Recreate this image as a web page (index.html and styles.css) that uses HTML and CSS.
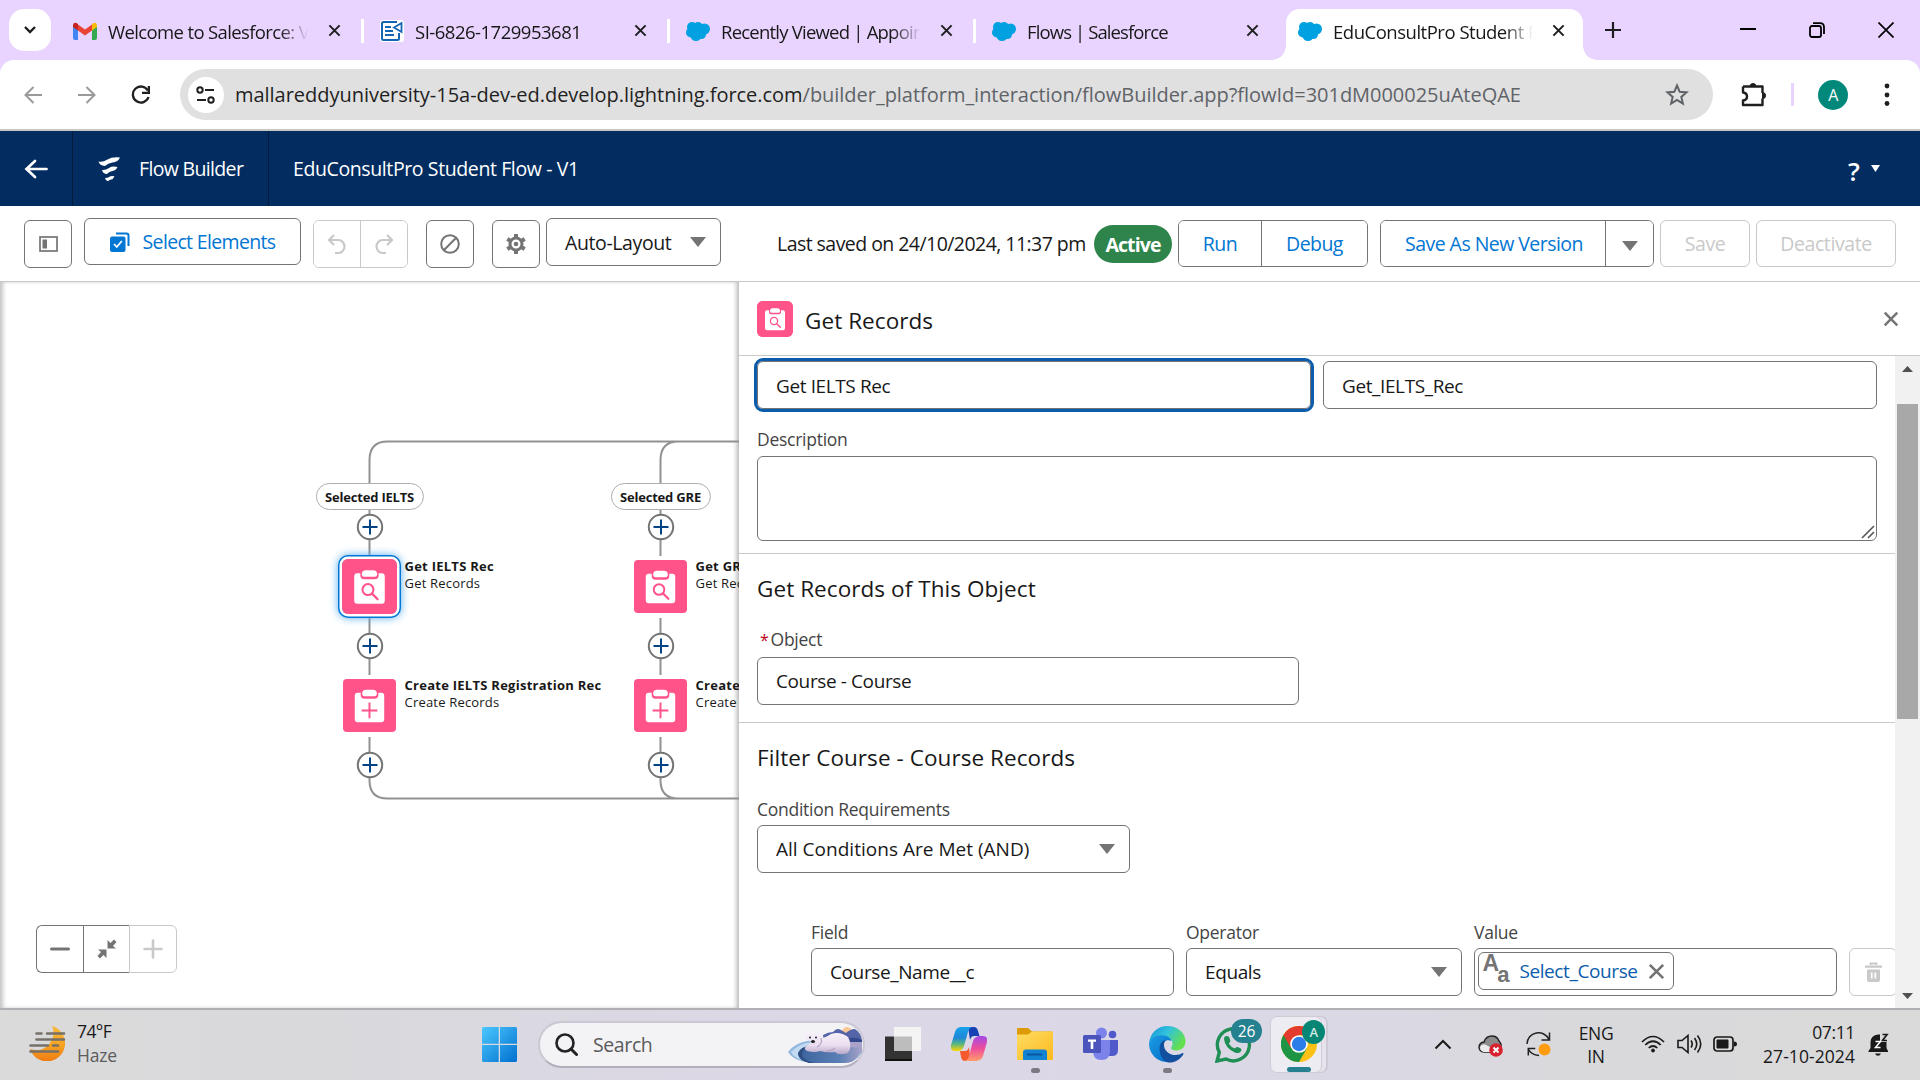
FILE: index.html
```html
<!DOCTYPE html>
<html lang="en">
<head>
<meta charset="utf-8">
<title>EduConsultPro Student Flow - V1</title>
<link rel="stylesheet" href="styles.css">
</head>
<body>
<svg class="defs" width="0" height="0">
  <defs>
    <symbol id="x" viewBox="0 0 14 14"><path d="M1.5 1.5l11 11M12.500 1.500l-11 11" fill="none" stroke="currentColor" stroke-width="2.200"/></symbol>
    <symbol id="cloud" viewBox="0 0 24 20"><g fill="#00a1e0"><circle cx="6" cy="6" r="5"/><circle cx="12" cy="5.500" r="4.500"/><circle cx="18.500" cy="8" r="5.500"/><circle cx="5" cy="11.500" r="5"/><circle cx="10" cy="14.500" r="5.500"/><circle cx="15.500" cy="13.500" r="4.500"/><path d="M5 6h13v8H5z"/></g></symbol>
    <symbol id="down" viewBox="0 0 16 10"><path d="M0 0h16L8 10z" fill="currentColor"/></symbol>
    <symbol id="clip" viewBox="0 0 54 54"><rect width="54" height="54" rx="4" fill="#ff538a"/><path d="M12 17q0-3 3-3h3v2q0 4 4 4h10q4 0 4-4v-2h3q3 0 3 3v24q0 3-3 3H15q-3 0-3-3z" fill="#fff"/><path d="M19.500 15q0-4 4-4h7q4 0 4 4 0 2.500-2 2.500h-11q-2 0-2-2.500z" fill="#fff"/></symbol>
    <symbol id="get" viewBox="0 0 54 54"><use href="#clip"/><circle cx="25.500" cy="30" r="5.400" fill="none" stroke="#ff538a" stroke-width="2"/><path d="M29.500 34l5.500 5.500" stroke="#ff538a" stroke-width="2.200" stroke-linecap="round"/></symbol>
    <symbol id="create" viewBox="0 0 54 54"><use href="#clip"/><path d="M27 24v16M19 32h16" stroke="#ff538a" stroke-width="2"/></symbol>
    <symbol id="add" viewBox="0 0 28 28"><circle cx="14" cy="14" r="12.200" fill="#fff" stroke="#747474" stroke-width="2"/><path d="M14 6.500v15M6.500 14h15" stroke="#014486" stroke-width="2"/></symbol>
  </defs>
</svg>

<header class="tabs">
  <button class="tab-search"><svg width="14" height="10" viewBox="0 0 14 10"><path d="M2 2l5 5 5-5" fill="none" stroke="#1f1f1f" stroke-width="2.400"/></svg></button>
  <div class="tab">
    <svg class="fav" width="24" height="18" viewBox="0 0 24 18"><path d="M0 3v13q0 2 2 2h3V8z" fill="#4285f4"/><path d="M24 3v13q0 2-2 2h-3V8z" fill="#34a853"/><path d="M5 2.500v6l7 5 7-5v-6l-7 5z" fill="#ea4335"/><path d="M0 3v2l5 3.500V2Q1-1 0 3z" fill="#c5221f"/><path d="M24 3v2l-5 3.500V2q4-3 5 1z" fill="#fbbc04"/></svg>
    <span class="tab-title t1">Welcome to Salesforce: Ver</span><svg class="tab-x"><use href="#x"/></svg>
  </div>
  <div class="tab">
    <svg class="fav" width="24" height="22" viewBox="0 0 24 22"><rect width="24" height="22" rx="3" fill="#fff"/><path d="M17 2H3.500q-1.500 0-1.500 1.500v15Q2 20 3.500 20h14q1.500 0 1.500-1.500V13" fill="none" stroke="#1565b5" stroke-width="2"/><path d="M5 7h6M5 11h8M5 15h9" stroke="#1565b5" stroke-width="2"/><path d="M21.500 3v9L14 7.500z" fill="#fff" stroke="#1565b5" stroke-width="1.800"/></svg>
    <span class="tab-title t2">SI-6826-1729953681</span><svg class="tab-x"><use href="#x"/></svg>
  </div>
  <div class="tab">
    <svg class="fav" width="24" height="20"><use href="#cloud"/></svg>
    <span class="tab-title t3">Recently Viewed | Appointm</span><svg class="tab-x"><use href="#x"/></svg>
  </div>
  <div class="tab">
    <svg class="fav" width="24" height="20"><use href="#cloud"/></svg>
    <span class="tab-title t4">Flows | Salesforce</span><svg class="tab-x"><use href="#x"/></svg>
  </div>
  <div class="tab active">
    <svg class="fav" width="24" height="20"><use href="#cloud"/></svg>
    <span class="tab-title t5">EduConsultPro Student Flow</span><svg class="tab-x"><use href="#x"/></svg>
  </div>
  <svg class="new-tab" width="16" height="16" viewBox="0 0 16 16"><path d="M8 0v16M0 8h16" stroke="#1f1f1f" stroke-width="2.200"/></svg>
  <div class="window-buttons">
    <svg width="16" height="16" viewBox="0 0 16 16"><path d="M0 7h16" stroke="#000" stroke-width="2"/></svg>
    <svg width="16" height="16" viewBox="0 0 16 16" fill="none" stroke="#000" stroke-width="1.800"><rect x="1" y="4" width="11" height="11" rx="2"/><path d="M4 1.200h7q4 0 4 4V12"/></svg>
    <svg width="16" height="16" viewBox="0 0 16 16"><path d="M.5.500l15 15M15.500.500l-15 15" stroke="#000" stroke-width="1.700"/></svg>
  </div>
</header>

<div class="toolbar-wrap">
<nav class="toolbar">
  <div class="nav-icons">
    <svg width="18" height="18" viewBox="0 0 18 18"><path d="M18 9H2M9.500 1L1.500 9l8 8" fill="none" stroke="#9a9a9a" stroke-width="2"/></svg>
    <svg width="18" height="18" viewBox="0 0 18 18"><path d="M0 9h16M8.500 1l8 8-8 8" fill="none" stroke="#9a9a9a" stroke-width="2"/></svg>
    <svg width="20" height="20" viewBox="0 0 20 20"><path d="M17.500 12A8 8 0 1 1 16.800 5.500" fill="none" stroke="#1f1f1f" stroke-width="2.300"/><path d="M19 1v8h-8V6.800h5.700V1z" fill="#1f1f1f"/></svg>
  </div>
  <div class="omnibox">
    <span class="site"><svg width="20" height="18" viewBox="0 0 20 18" fill="none" stroke="#1f1f1f" stroke-width="2"><circle cx="4" cy="4" r="2.700"/><path d="M9 4h9M1 14h9"/><circle cx="15" cy="14" r="2.700"/></svg></span>
    <span class="url">mallareddyuniversity-15a-dev-ed.develop.lightning.force.com<span class="path">/builder_platform_interaction/flowBuilder.app?flowId=301dM000025uAteQAE</span></span>
    <svg class="star" width="24" height="23" viewBox="0 0 24 23"><path d="M12 2.500l2.700 6.300 6.800.6-5.200 4.500 1.600 6.700L12 17l-5.900 3.600 1.600-6.700L2.500 9.400l6.800-.6z" fill="none" stroke="#5f6368" stroke-width="2"/></svg>
  </div>
  <svg class="puzzle" width="26" height="26" viewBox="0 0 26 26"><path d="M2 4.500h19.500V11M2 4.500v6q4 .5 4 4t-4 4V23h19.500v-6.500" fill="none" stroke="#1f1f1f" stroke-width="2.400" stroke-linejoin="round"/><path d="M9 4.500a3 3 0 0 1 6 0zM21.500 10.500a3 3 0 0 1 0 6.200z" fill="#1f1f1f" stroke="#1f1f1f"/></svg>
  <i class="bar-divider"></i>
  <span class="avatar">A</span>
  <svg class="kebab" width="6" height="24" viewBox="0 0 6 24"><circle cx="3" cy="3" r="2.400"/><circle cx="3" cy="12" r="2.400"/><circle cx="3" cy="20.500" r="2.400"/></svg>
</nav>
</div>

<header class="app-header">
  <a class="back"><svg width="24" height="20" viewBox="0 0 24 20"><path d="M22.500 10H3M11 2l-8.500 8L11 18" fill="none" stroke="#fff" stroke-width="2.700" stroke-linecap="round"/></svg></a>
  <div class="brand"><svg width="23" height="26" viewBox="0 0 23 26" fill="#fff"><path d="M.5 5.500q4.500.8 9-2T22 1.500Q20 6 14.500 6.500 10 7 7 10 1.500 9.500.5 5.500zM4 14q4 .3 7-2t8.500-1q-1.500 3.500-5 4-3.500.3-5.500 3Q5 18 4 14zM7 22q3 0 4.500-1.200t5-.6q-1 3-4 3.600-1.500.3-2.500 1.500Q7.500 24.500 7 22z"/></svg><span>Flow Builder</span></div>
  <div class="flow-title">EduConsultPro Student Flow - V1</div>
  <div class="help"><b>?</b><svg width="9" height="7" viewBox="0 0 16 10" preserveAspectRatio="none"><path d="M0 0h16L8 10z" fill="#fff"/></svg></div>
</header>

<section class="actions">
  <button class="btn sq"><svg width="19" height="16" viewBox="0 0 19 16"><rect x="1" y="1" width="17" height="14" fill="none" stroke="#747474" stroke-width="1.700"/><path d="M3.500 3.500h4.500v9H3.500z" fill="#747474"/></svg></button>
  <button class="btn select"><svg width="20" height="20" viewBox="0 0 20 20"><path d="M6 1.500h10.500q2 0 2 2V14" fill="none" stroke="#0176d3" stroke-width="2"/><rect y="4.500" width="15.500" height="15.500" rx="2" fill="#0176d3"/><path d="M4 12l2.800 3 5-6" fill="none" stroke="#fff" stroke-width="1.800"/></svg><span>Select Elements</span></button>
  <div class="group off undo">
    <button><svg width="20" height="21" viewBox="0 0 20 21"><path d="M7 1L2 6l5 5M2.500 6h9a6 6.500 0 0 1 0 13H8" fill="none" stroke="#c9c9c9" stroke-width="2.200"/></svg></button>
    <button><svg width="20" height="21" viewBox="0 0 20 21"><path d="M13 1l5 5-5 5M17.500 6h-9a6 6.500 0 0 0 0 13H12" fill="none" stroke="#c9c9c9" stroke-width="2.200"/></svg></button>
  </div>
  <button class="btn sq ban"><svg width="20" height="20" viewBox="0 0 20 20" fill="none" stroke="#747474" stroke-width="2"><circle cx="10" cy="10" r="8.800"/><path d="M4.300 15.700L15.700 4.300"/></svg></button>
  <button class="btn sq gear"><svg width="20" height="20" viewBox="0 0 20 20"><circle cx="10" cy="10" r="6" fill="none" stroke="#747474" stroke-width="3"/><circle cx="10" cy="10" r="2.300" fill="#747474"/><path d="M10 0v4M10 16v4M1.300 5l3.500 2M15.200 13l3.500 2M1.300 15l3.500-2M15.200 7l3.500-2" stroke="#747474" stroke-width="4"/></svg></button>
  <button class="btn layout"><span>Auto-Layout</span><svg class="tri"><use href="#down"/></svg></button>
  <span class="saved">Last saved on 24/10/2024, 11:37 pm</span>
  <span class="badge">Active</span>
  <div class="group run"><button>Run</button><button>Debug</button></div>
  <div class="group version"><button>Save As New Version</button><button><svg class="tri"><use href="#down"/></svg></button></div>
  <button class="btn off save">Save</button>
  <button class="btn off deact">Deactivate</button>
</section>

<main class="work">
  <section class="canvas">
    <svg class="lines" width="739" height="726" viewBox="0 282 739 726" fill="none" stroke="#919191" stroke-width="2">
      <path d="M739 441.500H387.500Q369.500 441.500 369.500 460V556M678.500 441.500Q660.500 441.500 660.500 460V556"/>
      <path d="M369.500 618v57M660.500 618v57M369.500 737v43.500Q369.500 798.500 387.500 798.500H739M660.500 737v43.500Q660.500 798.500 678.500 798.500"/>
    </svg>
    <div class="branch b1">
      <span class="pill">Selected IELTS</span>
      <svg class="plus p1"><use href="#add"/></svg>
      <div class="node n1 selected"><svg><use href="#get"/></svg><p><b>Get IELTS Rec</b><span>Get Records</span></p></div>
      <svg class="plus p2"><use href="#add"/></svg>
      <div class="node n2"><svg><use href="#create"/></svg><p><b>Create IELTS Registration Rec</b><span>Create Records</span></p></div>
      <svg class="plus p3"><use href="#add"/></svg>
    </div>
    <div class="branch b2">
      <span class="pill">Selected GRE</span>
      <svg class="plus p1"><use href="#add"/></svg>
      <div class="node n1"><svg><use href="#get"/></svg><p><b>Get GRE Rec</b><span>Get Records</span></p></div>
      <svg class="plus p2"><use href="#add"/></svg>
      <div class="node n2"><svg><use href="#create"/></svg><p><b>Create GRE Registration Rec</b><span>Create Records</span></p></div>
      <svg class="plus p3"><use href="#add"/></svg>
    </div>
    <div class="zoom">
      <button><svg width="20" height="20" viewBox="0 0 20 20"><path d="M1.500 10h17" stroke="#747474" stroke-width="3" stroke-linecap="round"/></svg></button>
      <button><svg width="20" height="20" viewBox="0 0 20 20" fill="#747474"><path d="M10.500 1v8.500H19L16 7l3.500-4L17 .5 13.500 4zM9.500 19v-8.500H1L4 13 .5 17 3 19.500 6.500 16z"/></svg></button>
      <button class="off"><svg width="20" height="20" viewBox="0 0 20 20"><path d="M1.500 10h17M10 1.500v17" stroke="#c9c9c9" stroke-width="2.600" stroke-linecap="round"/></svg></button>
    </div>
  </section>

  <aside class="panel">
    <header class="panel-head">
      <svg class="head-icon" width="36" height="36"><use href="#get"/></svg>
      <h2>Get Records</h2>
      <svg class="close" width="16" height="16"><use href="#x"/></svg>
    </header>
    <div class="panel-body">
      <form class="form">
        <section class="intro">
          <div class="pair"><div class="field focus">Get IELTS Rec</div><div class="field">Get_IELTS_Rec</div></div>
          <label>Description</label>
          <div class="field area"><svg width="14" height="14" viewBox="0 0 14 14"><path d="M1 13L13 1M7 13l6-6" stroke="#555" stroke-width="1.600"/></svg></div>
        </section>
        <section class="object">
          <h3>Get Records of This Object</h3>
          <label class="req"><i>*</i>Object</label>
          <div class="field obj">Course - Course</div>
        </section>
        <section class="filter">
          <h3 class="h-filter">Filter Course - Course Records</h3>
          <label>Condition Requirements</label>
          <div class="field cond"><span>All Conditions Are Met (AND)</span><svg class="tri"><use href="#down"/></svg></div>
          <div class="condition">
            <div><label>Field</label><div class="field f1">Course_Name__c</div></div>
            <div><label>Operator</label><div class="field f2"><span>Equals</span><svg class="tri"><use href="#down"/></svg></div></div>
            <div><label>Value</label><div class="field f3"><span class="token"><span class="aa"><b>A</b><b>a</b></span><a>Select_Course</a><svg width="17" height="17" viewBox="0 0 14 14"><use href="#x"/></svg></span></div></div>
            <button class="trash" type="button"><svg width="17" height="20" viewBox="0 0 17 20"><path d="M5.500 3V1.500h6V3" fill="none" stroke="#c9c9c9" stroke-width="1.800"/><path d="M0 3.500h17v2.300H0zM2 7.500h13V18q0 2-2 2H4q-2 0-2-2z" fill="#c9c9c9"/><path d="M6.700 10.500v6M10.300 10.500v6" stroke="#fff" stroke-width="1.700"/></svg></button>
          </div>
        </section>
      </form>
      <div class="scroll">
        <svg width="11" height="6" viewBox="0 0 11 6"><path d="M0 6h11L5.500 0z" fill="#505050"/></svg>
        <i></i>
        <svg width="11" height="6" viewBox="0 0 11 6"><path d="M0 0h11L5.500 6z" fill="#505050"/></svg>
      </div>
    </div>
  </aside>
</main>

<footer class="taskbar">
  <div class="weather">
    <svg width="37" height="36" viewBox="0 0 37 36"><defs><linearGradient id="moon" x2="0" y2="1"><stop stop-color="#f9b73a"/><stop offset=".5" stop-color="#f5a623"/><stop offset="1" stop-color="#f07c12"/></linearGradient></defs><path d="M23 1A18 18 0 1 1 1 24q13 4 20-6 6-9 2-17z" fill="url(#moon)"/><path d="M7.500 8.500h5M18 8.500h17M7.500 14.500h27.500M1.500 20.500H19M24 20.500h5M1.500 26.500H29" stroke="#767069" stroke-width="2.600" stroke-linecap="round"/></svg>
    <div class="wtext"><span>74°F</span><span class="sub">Haze</span></div>
  </div>
  <div class="apps">
    <svg class="win" width="35" height="35" viewBox="0 0 35 35"><defs><linearGradient id="w" x2="1" y2="1"><stop stop-color="#4cc8ff"/><stop offset="1" stop-color="#0070cf"/></linearGradient></defs><path d="M1 0h15.700v16.700H0V1zM18 0h16l1 1v15.700H18zM0 18h16.700v17H1l-1-1zM18 18h17v16l-1 1H18z" fill="url(#w)"/></svg>
    <div class="search">
      <svg width="23" height="23" viewBox="0 0 23 23"><circle cx="10" cy="10" r="8.500" fill="none" stroke="#222" stroke-width="2.600"/><path d="M16 16l5.500 5.500" stroke="#222" stroke-width="3" stroke-linecap="round"/></svg>
      <span>Search</span>
      <svg class="bear" width="75" height="37" viewBox="0 0 75 37"><defs><linearGradient id="sea" x2="1"><stop stop-color="#3a649c"/><stop offset=".65" stop-color="#5b7fb5"/><stop offset="1" stop-color="#aaa3c8"/></linearGradient><linearGradient id="fur" x2="0" y2="1"><stop stop-color="#f8f2fb"/><stop offset=".6" stop-color="#e9deef"/><stop offset="1" stop-color="#b9a6c8"/></linearGradient></defs><circle cx="59" cy="6" r="5" fill="#f7c795"/><path d="M35 9q5-3 10-3 4-5 8-2l5 3q7-6 12-3 4 6 4 12v12H37z" fill="#5364a9"/><path d="M38 12q12-3 20 1 9-3 16 1v3H40z" fill="#34498e"/><path d="M58 16h16v12H58z" fill="#a9a2c9"/><path d="M0 26Q9 14 30 14l44 10q1 6-9 12H18Q5 34 0 26z" fill="#93b9df"/><path d="M3 26Q12 17 24 16l-8 8q-4 6 4 11Q6 33 3 26z" fill="#c4daf0"/><path d="M10 28q4-8 15-10l49 4q-2 9-12 15H22Q11 35 10 28z" fill="url(#sea)"/><path d="M10 27q0 7 11 10h5q-12-3-12-9 1-6 8-8-10 1-12 7z" fill="#2f4f84"/><path d="M17 8q0-3 3-2 1 1 2 1h8q4-3 4 1 0 2-1 4 4 0 10-4 9-3 17 3 3 5 2 12-1 5-7 5-5 1-8-2-8 1-15-1-5 2-13 0-5-3 1-6l4-3q-7-2-7-8z" fill="url(#fur)"/><path d="M33 12q2 6-4 9M47 22q-3 3-9 3" fill="none" stroke="#b7a6c5" stroke-width="1.200"/><circle cx="22" cy="11.500" r="1" fill="#222"/><circle cx="28" cy="11.500" r="1" fill="#222"/><ellipse cx="25" cy="15.500" rx="2" ry="1.500" fill="#222"/></svg>
    </div>
    <svg class="tv" width="36" height="34" viewBox="0 0 36 34"><path d="M0 9.500h27V34H0z" fill="#333"/><path d="M0 32h27v2H0z" fill="#111"/><path d="M9 0h27v24H9z" fill="#f4f4f4"/><path d="M9 9.500h18V24H9z" fill="#bdbdbd"/></svg>
    <svg class="copilot" width="36" height="34" viewBox="0 0 36 34"><defs><linearGradient id="c1" x2="0" y2="1"><stop stop-color="#1aa2e8"/><stop offset=".45" stop-color="#1e88d8"/><stop offset=".7" stop-color="#55b583"/><stop offset="1" stop-color="#ffd500"/></linearGradient><linearGradient id="c2" x2="0" y2="1"><stop stop-color="#a349e8"/><stop offset=".5" stop-color="#ee4d9b"/><stop offset="1" stop-color="#ff9d6a"/></linearGradient></defs><path d="M17 0h6q3 0 4 4l1.500 5H23q-3 0-4 4z" fill="#1740b5"/><path d="M9 0h12q-3 1-4 5l-4 14q-1 4-5 5H4q-5 0-4-6L4 5Q5 1 9 0z" fill="url(#c1)"/><path d="M9 24h5q3 0 4-4l1 9q-1 4-5 5-3 0-4-4z" fill="#f55a2c"/><path d="M28 9h4q5 0 4 6l-4 14q-1 4-6 5H14q3-1 4-5l4-15q1-4 6-5z" fill="url(#c2)"/></svg>
    <div class="app dot explorer"><svg width="36" height="34" viewBox="0 0 36 34"><defs><linearGradient id="fold" x2="1" y2="1"><stop stop-color="#ffdc62"/><stop offset="1" stop-color="#fbba20"/></linearGradient></defs><path d="M0 2q0-1 1-1h10l4 3.500h20l1 1V12H0z" fill="#dc9b06"/><path d="M0 7.500h11l4-3h21V33H0z" fill="url(#fold)"/><path d="M6 33v-8q0-2.500 3-2.500h18q3 0 3 2.500v8z" fill="#1282d2"/><path d="M10 27.500h15" stroke="#0b559c" stroke-width="2"/></svg></div>
    <svg class="teams" width="36" height="34" viewBox="0 0 36 34"><circle cx="18.500" cy="6" r="5.500" fill="#7b83eb"/><circle cx="29.500" cy="7.500" r="3.800" fill="#5059c9"/><path d="M23 13h12v10q0 6-6 6h-4z" fill="#5059c9"/><path d="M10 13h17v11q0 9-8.500 9T10 24z" fill="#7b83eb"/><rect y="8" width="18" height="18" rx="1.500" fill="#4b53bc"/><path d="M5 12.500h8v2.300h-2.700V22H7.700v-7.200H5z" fill="#fff"/></svg>
    <div class="app dot edge"><svg width="37" height="37" viewBox="0 0 37 37"><defs><linearGradient id="e1" x2="1" y2=".5"><stop stop-color="#168ed8"/><stop offset=".5" stop-color="#32c2dd"/><stop offset="1" stop-color="#63e04e"/></linearGradient><linearGradient id="e2" x2="1" y2="1"><stop stop-color="#1b9de2"/><stop offset="1" stop-color="#0368c7"/></linearGradient></defs><path d="M0 18.500A18.300 18.300 0 0 1 18.500 0C29 0 36.500 7.500 36.500 15c0 6-4 9.500-9 9.500-5 0-6-2-5-3.500 3-5-1-10-6-10C9 11 1 12 0 18.500z" fill="url(#e1)"/><path d="M0 18.500C1 12 7 9 12.500 9.300 18 9.500 22 12 22.500 15c-5-2-9 1-9 6 0 8 6 12 12 13.500A18.300 18.300 0 0 1 0 18.500z" fill="url(#e2)"/><path d="M10.500 22C10.500 17 14 14 17 14c-5 5 0 15 9 15 3.500 0 6-1 7.500-2 1.500 0 1 1 .5 2-5 7-11 8-15 7.500-5-1-8.500-8-8.500-14.500z" fill="#124f9e"/></svg></div>
    <div class="wa"><svg width="37" height="37" viewBox="0 0 37 37"><path d="M2 35l2.300-8.600A16 16 0 1 1 11 33z" fill="none" stroke="#1f8f55" stroke-width="3.400"/><path d="M9 13q0-3 3-3 2 0 2.500 2l.8 2.500q.3 1.500-1.500 3 2.500 4 6 5 1.500-2 3-1.500l3 1.500q1.500 1 0 3-2 2.500-6 1Q10 22 9 13z" fill="#1f8f55"/></svg><span>26</span></div>
    <div class="chrome"><svg width="36" height="36" viewBox="0 0 36 36"><circle cx="18" cy="18" r="18" fill="#fbc116"/><path d="M18 18L2.400 9A18 18 0 0 0 18 36l7.800-13.500z" fill="#1e9544"/><path d="M2.400 9A18 18 0 0 1 33.600 9H18l-7.800 13.500z" fill="#e33b2e"/><circle cx="18" cy="18" r="8.800" fill="#fff"/><circle cx="18" cy="18" r="7.200" fill="#2b7de9"/></svg><span>A</span></div>
  </div>
  <div class="tray">
    <svg class="chev" width="18" height="11" viewBox="0 0 18 11"><path d="M1.500 9.500L9 2l7.500 7.500" fill="none" stroke="#1a1a1a" stroke-width="2"/></svg>
    <svg class="cloudx" width="26" height="22" viewBox="0 0 26 22"><path d="M6 17q-5-.5-5-5 .5-4.500 5-5 2-6 8-6 5 0 7 5l2 3v8z" fill="#8c8c8c" stroke="#222" stroke-width="1.400"/><path d="M2 12q3-5 8-1l6 3-4 3H6q-4-.5-4-5z" fill="#ececec"/><circle cx="18" cy="15" r="6.800" fill="#d8232f"/><path d="M15.500 12.500l5 5M20.500 12.500l-5 5" stroke="#fff" stroke-width="2"/></svg>
    <svg class="sync" width="26" height="26" viewBox="0 0 26 26"><path d="M1 13A11.500 11.500 0 0 1 23 8.500M23.500 1.500v7.500h-8M13 24.500Q5 24 2.300 18M2.300 24.500v-7h7" fill="none" stroke="#222" stroke-width="1.500"/><circle cx="18.500" cy="18.500" r="6" fill="#ff9c0f"/></svg>
    <div class="lang"><span>ENG</span><span>IN</span></div>
    <svg class="wifi" width="24" height="18" viewBox="0 0 24 18" fill="none" stroke="#1a1a1a" stroke-width="1.700"><path d="M1 7q11-11 22 0M4.300 10q7.700-7.500 15.400 0M7.700 13q4.300-4 8.600 0"/><circle cx="12" cy="15.500" r="1.500" fill="#1a1a1a" stroke-width="1"/></svg>
    <svg class="spk" width="25" height="20" viewBox="0 0 25 20" fill="none" stroke="#1a1a1a" stroke-width="1.600"><path d="M1 6.500h4L11 1.500v17L5 13.500H1zM14 6.500q2.500 3.500 0 7M17.500 4q4.500 6 0 12M20.500 1.500q6.500 8.500 0 17"/></svg>
    <svg class="bat" width="25" height="16" viewBox="0 0 25 16"><rect x="1" y="1" width="19" height="14" rx="3" fill="none" stroke="#1a1a1a" stroke-width="1.700"/><rect x="3.500" y="3.500" width="12" height="9" rx="1" fill="#1a1a1a"/><path d="M21 5.500q3 0 3 2.500t-3 2.500z" fill="#1a1a1a"/></svg>
    <div class="clock"><span>07:11</span><span>27-10-2024</span></div>
    <svg class="bell" width="21" height="23" viewBox="0 0 21 23"><path d="M2.500 9Q3 2 10 1.500h2V9h6.500v6l1.500 3v1H.5v-1l2-3zM7 20.500h6q-1 2.300-3 2.300T7 20.500z" fill="#1a1a1a"/><path d="M14.500 1.500h4.500l-4.500 6H19" fill="none" stroke="#1a1a1a" stroke-width="1.700"/><path d="M7.500 8.500h5l-5 6h5" fill="none" stroke="#fff" stroke-width="1.500"/></svg>
  </div>
</footer>
</body>
</html>
```
FILE: styles.css
```css
* { box-sizing: border-box; }
body {
  margin: 0; width: 1920px; height: 1080px; overflow: hidden;
  display: flex; flex-direction: column;
  font-family: "Open Sans", "Noto Sans", sans-serif; font-size: 19.5px; color: #181818;
  letter-spacing: -0.02em; background: #fff; white-space: nowrap;
}
svg { display: block; flex: none; }
.defs { position: absolute; }
button { font: inherit; letter-spacing: inherit; padding: 0; background: #fff; border: 0; display: flex; align-items: center; justify-content: center; color: #0176d3; white-space: nowrap; }

/* browser tab strip */
.tabs { height: 60px; flex: none; background: #e8d4ff; display: flex; align-items: flex-start; padding-left: 9px; }
.tab-search { width: 42px; height: 42px; margin-top: 9px; border-radius: 15px; }
.tab { width: 306px; height: 51px; margin-top: 9px; padding-left: 16px; display: flex; align-items: center; padding-bottom: 8px; border-right: 3px solid transparent; position: relative; }
.tab:nth-child(2) { margin-left: 7px; padding-left: 15px; }
.tab:nth-child(2) .tab-x { margin-left: 18px; }
.tab:nth-child(-n+5):not(.active)::after { content: ""; position: absolute; right: -3px; top: 10px; width: 3px; height: 24px; background: #fff; }
.tab:nth-child(5)::after { display: none; }
.tab.active { width: 297px; background: #fff; border: 0; border-radius: 14px 14px 0 0; margin-left: 4px; padding-left: 12px; }
.tab.active::before, .tab.active::after { content: ""; position: absolute; bottom: 0; width: 14px; height: 14px; }
.tab.active::before { left: -14px; background: radial-gradient(circle at 0 0, transparent 13.5px, #fff 14px); }
.tab.active::after { right: -14px; background: radial-gradient(circle at 100% 0, transparent 13.5px, #fff 14px); }
.tab-title { width: 202px; margin-left: 11px; font-size: 18.500px; overflow: hidden; line-height: 30px; padding-top: 2px; letter-spacing: -0.034em; -webkit-mask-image: linear-gradient(90deg, #000 172px, transparent 200px); mask-image: linear-gradient(90deg, #000 172px, transparent 200px); }
.t2 { letter-spacing: -0.027em; }
.t3 { letter-spacing: -0.042em; }
.t4 { letter-spacing: -0.048em; }
.t5 { letter-spacing: -0.026em; }
.tab-x { width: 13px; height: 13px; margin-left: 17px; color: #1f1f1f; }
.new-tab { margin: 22px 0 0 22px; }
.window-buttons { display: flex; gap: 53px; margin: 22px 0 0 119px; }

/* address bar */
.toolbar-wrap { background: #e8d4ff; flex: none; }
.toolbar { height: 71px; display: flex; align-items: center; border-bottom: 2px solid #c6c6c6; border-radius: 14px 14px 0 0; background: #fff; }
.nav-icons { display: flex; align-items: center; gap: 35.500px; margin-left: 24px; width: 156px; }
.omnibox { width: 1533px; height: 51px; border-radius: 26px; background: #e0e0e0; display: flex; align-items: center; padding-left: 8px; }
.site { width: 36px; height: 36px; border-radius: 50%; background: #fff; display: grid; place-items: center; }
.url { margin-left: 11px; width: 1430px; font-size: 20px; color: #1f1f1f; letter-spacing: -0.0015em; }
.path { color: #5f6368; }
.puzzle { margin-left: 28px; }
.bar-divider { width: 3px; height: 23px; background: #e8d4ff; margin-left: 24px; }
.avatar { width: 30px; height: 30px; border-radius: 50%; background: #00897b; color: #fff; font-size: 16px; margin-left: 24px; display: grid; place-items: center; }
.kebab { margin-left: 36px; fill: #1f1f1f; }

/* app header */
.app-header { height: 75px; flex: none; background: #032d60; color: #fff; display: flex; align-items: stretch; }
.app-header > * { display: flex; align-items: center; }
.back { width: 73px; padding-left: 24px; border-right: 1px solid #041c3c; }
.brand { width: 196px; padding-left: 25px; border-right: 1px solid #041c3c; gap: 18px; letter-spacing: -0.034em; }
.flow-title { padding-left: 24px; width: 1579px; }
.help { gap: 12px; }
.help b { font-size: 26px; font-weight: 600; margin-top: 4px; }

/* builder actions */
.actions { height: 76px; flex: none; border-bottom: 1px solid #c9c9c9; display: flex; align-items: flex-start; padding: 14px 0 0 24px; letter-spacing: -0.028em; }
.btn { border: 1.5px solid #747474; border-radius: 6px; height: 47px; flex: none; }
.sq { width: 48px; height: 48px; }
.select { width: 217px; margin: -2px 0 0 12px; gap: 13px; letter-spacing: -0.034em; }
.group { display: flex; height: 47px; border: 1.5px solid #747474; border-radius: 6px; overflow: hidden; flex: none; }
.group button + button { border-left: 1.5px solid #747474; }
.group.off, .btn.off { border-color: #c9c9c9; color: #c9c9c9; }
.group.off button + button { border-color: #c9c9c9; }
.undo { width: 95px; height: 48px; margin-left: 12px; }
.undo button { flex: 1; }
.ban, .gear { margin-left: 18px; }
.layout { width: 175px; height: 48px; margin: -2px 0 0 6px; color: #181818; justify-content: space-between; padding: 0 14px 0 18px; letter-spacing: -0.02em; }
.tri { width: 16px; height: 10px; color: #747474; }
.saved { margin-left: 56px; width: 317px; line-height: 48px; }
.badge { width: 78px; height: 38px; margin-top: 5px; border-radius: 19px; background: #2e844a; color: #fff; font-weight: 700; text-align: center; line-height: 39px; letter-spacing: -0.045em; }
.run { margin-left: 6px; width: 190px; }
.run button:first-child { width: 82px; }
.run button:last-child { flex: 1; }
.version { margin-left: 12px; width: 274px; }
.version button:first-child { flex: 1; padding-left: 2px; }
.version button:last-child { width: 48px; padding-top: 4px; }
.save { width: 90px; margin-left: 6px; letter-spacing: -0.02em; }
.deact { width: 140px; margin-left: 6px; letter-spacing: -0.02em; }

/* flow canvas */
.work { flex: none; height: 726px; display: flex; }
.canvas { width: 739px; position: relative; overflow: hidden; box-shadow: inset 4px 0 4px -1px #c4c4c4, inset -5px 0 5px -3px #b0b0b0; }
.lines { position: absolute; left: 0; top: 0; }
.branch { position: absolute; top: 0; width: 0; }
.b1 { left: 369.5px; }
.b2 { left: 660.5px; }
.branch > * { position: absolute; }
.pill { top: 201px; left: 0; transform: translateX(-50%); height: 27px; line-height: 26px; border: 1px solid #aeaeae; border-radius: 14px; background: #fff; font-weight: 700; font-size: 13px; padding: 0 8.5px; letter-spacing: -0.014em; }
.plus { width: 28px; height: 28px; left: -14px; }
.p1 { top: 231px; }
.p2 { top: 350px; }
.p3 { top: 469px; }
.node { left: -27px; display: flex; }
.node svg { width: 53px; height: 53px; }
.n1 { top: 278px; }
.n2 { top: 397px; }
.selected svg { width: 55px; height: 55px; margin: -1px; border-radius: 6px; box-shadow: 0 0 0 2.500px #fff, 0 0 0 4px #0176d3, 0 0 8px 4px #5aaef0; }
.node p { margin: -2px 0 0 9px; font-size: 13px; line-height: 17.300px; letter-spacing: 0.015em; }
.node b, .node span { display: block; }
.node b { letter-spacing: 0.02em; }
.zoom { position: absolute; left: 36px; top: 643px; display: flex; }
.zoom button { width: 46px; height: 48px; border: 1.500px solid #747474; border-right: 0; }
.zoom button:first-child { border-radius: 6px 0 0 6px; width: 47px; }
.zoom button:last-child { border: 1.500px solid #c9c9c9; border-radius: 0 6px 6px 0; width: 48px; }

/* property panel */
.panel { width: 1181px; display: flex; flex-direction: column; background: #fff; }
.panel-head { height: 74px; flex: none; border-bottom: 1px solid #c9c9c9; display: flex; align-items: center; padding: 1px 21px 0 18px; }
.head-icon { border-radius: 6px; background: #ff538a; }
h2, h3 { margin: 0; font-weight: 400; font-size: 22.500px; letter-spacing: 0.003em; }
.panel-head h2 { margin: 2px 0 0 12px; flex: 1; }
.close { color: #747474; }
.panel-body { display: flex; flex: 1; min-height: 0; }
.form { width: 1156px; overflow: hidden; }
.form section { padding-left: 18px; border-bottom: 1px solid #c9c9c9; }
.form .filter { border: 0; }
.field { height: 48px; border: 1.500px solid #747474; border-radius: 6px; display: flex; align-items: center; justify-content: space-between; padding: 0 14px 0 18px; font-size: 19px; }
.field.focus { outline: 3px solid #0b5cab; }
.pair .field { padding-top: 1px; }
.intro { height: 198px; padding-top: 5px; }
.pair { display: grid; grid-template-columns: 554px 554px; gap: 12px; }
label { display: block; font-size: 17.500px; line-height: 20px; color: #444; letter-spacing: -0.015em; }
.intro label { margin: 20px 0 7px; }
.area { width: 1120px; height: 85px; align-items: flex-end; justify-content: flex-end; padding: 0 1px 1px; }
h3 { line-height: 30px; padding-top: 20px; }
.object { height: 169px; }
.object label { margin: 25px 0 7px; padding-left: 3px; }
.req i { color: #ba0517; font-style: normal; margin-right: 2px; font-size: 16px; }
.obj { width: 542px; }
.filter label { margin: 26px 0 6px; }
.cond { width: 373px; letter-spacing: 0.001em; }
.condition { display: flex; gap: 12px; margin: 50px 0 0 54px; }
.condition label { margin: -1px 0 6px; }
.f1 { width: 363px; }
.f2 { width: 276px; }
.f3 { width: 363px; padding: 0 2.500px; }
.token { width: 196px; height: 38px; border: 1px solid #747474; border-radius: 6px; display: flex; align-items: center; padding: 0 8px 0 4px; margin-top: -2px; }
.token a { color: #0b5cab; flex: 1; margin-left: 10px; }
.token svg { color: #747474; }
.aa { display: flex; color: #747474; font-family: "Liberation Sans", Arial, sans-serif; line-height: 24px; letter-spacing: 0; }
.aa b:first-child { font-size: 23px; margin-top: -4px; }
.aa b:last-child { font-size: 22px; margin: 8px 0 0 -2px; }
.trash { width: 48px; height: 48px; margin-top: 25px; border: 1.500px solid #c9c9c9; border-radius: 6px; flex: none; }
.scroll { width: 25px; background: #f1f1f1; display: flex; flex-direction: column; align-items: center; padding: 10px 0 9px; }
.scroll i { width: 21px; height: 315px; margin: 32px 0 auto; background: #a8a8a8; }

/* desktop taskbar */
.taskbar { height: 72px; flex: none; border-top: 2px solid #b0b0b4; background: linear-gradient(90deg, #dadada 0, #d9d9dd 380px, #dcd7e7 800px, #dbd8e6 1300px, #d9d9dc 1560px, #dadada 100%); display: flex; font-size: 17.500px; }
.weather { width: 482px; display: flex; padding: 15px 0 0 29px; }
.wtext { display: flex; flex-direction: column; line-height: 24px; margin: -6px 0 0 11px; }
.wtext span:first-child { letter-spacing: -0.035em; }
.wtext .sub { color: #5c5c5c; letter-spacing: -0.01em; }
.apps { width: 952px; display: flex; }
.apps > * { flex: none; }
.win { margin-top: 17px; }
.search { width: 327px; height: 47px; margin: 11px 0 0 21px; border: 2px solid #cbc7d3; border-bottom-color: #b3afbc; border-radius: 24px; background: #f3f3f6; display: flex; align-items: center; padding-left: 15px; }
.search span { margin-left: 15px; flex: 1; font-size: 19.500px; color: #5a5a5a; }
.bear { border-radius: 0 18px 18px 0; }
.tv { margin: 17px 0 0 20px; }
.copilot { margin: 17px 0 0 30px; }
.app { position: relative; height: 70px; padding-top: 16px; }
.dot::after { content: ""; position: absolute; left: 14px; bottom: 7px; width: 9px; height: 5px; border-radius: 3px; background: #7c7983; }
.explorer { margin-left: 30px; padding-top: 17px; }
.teams { margin: 17px 0 0 30px; }
.edge { margin-left: 30px; }
.wa { margin: 16px 0 0 29px; position: relative; }
.wa span { position: absolute; left: 16px; top: -7px; width: 31px; height: 24px; border-radius: 12px; background: #25808f; color: #fff; font-size: 15.500px; line-height: 24px; text-align: center; letter-spacing: 0; }
.chrome { width: 52px; height: 57px; margin: 6px 0 0 18px; background: #eeecf3; border: 1px solid #d0cbd8; border-radius: 7px; padding: 9px 0 0 10px; position: relative; box-shadow: 5px 0 0 -1px #e6e3ed, 6px 0 0 0 #cdc9d6; }
.chrome::after { content: ""; position: absolute; left: 16px; bottom: 0; width: 24px; height: 5px; border-radius: 3px; background: #25808f; }
.chrome span { position: absolute; left: 31px; top: 3px; width: 23px; height: 24px; border-radius: 50%; background: #078675; color: #cfe9e4; font-size: 13px; font-weight: 600; line-height: 24px; text-align: center; }
.tray { display: flex; align-items: center; padding-bottom: 2px; }
.cloudx { margin-left: 26px; margin-top: 3px; }
.sync { margin-left: 22px; }
.lang { width: 50px; margin: 2px 0 0 19px; display: flex; flex-direction: column; align-items: center; line-height: 23px; }
.wifi { margin-left: 20px; }
.spk { margin-left: 12px; }
.bat { margin-left: 11px; }
.clock { width: 105px; margin-left: 12px; display: flex; flex-direction: column; align-items: flex-end; line-height: 24px; letter-spacing: 0.004em; }
.clock span:first-child { letter-spacing: -0.02em; }
.bell { margin-left: 13px; }
```
